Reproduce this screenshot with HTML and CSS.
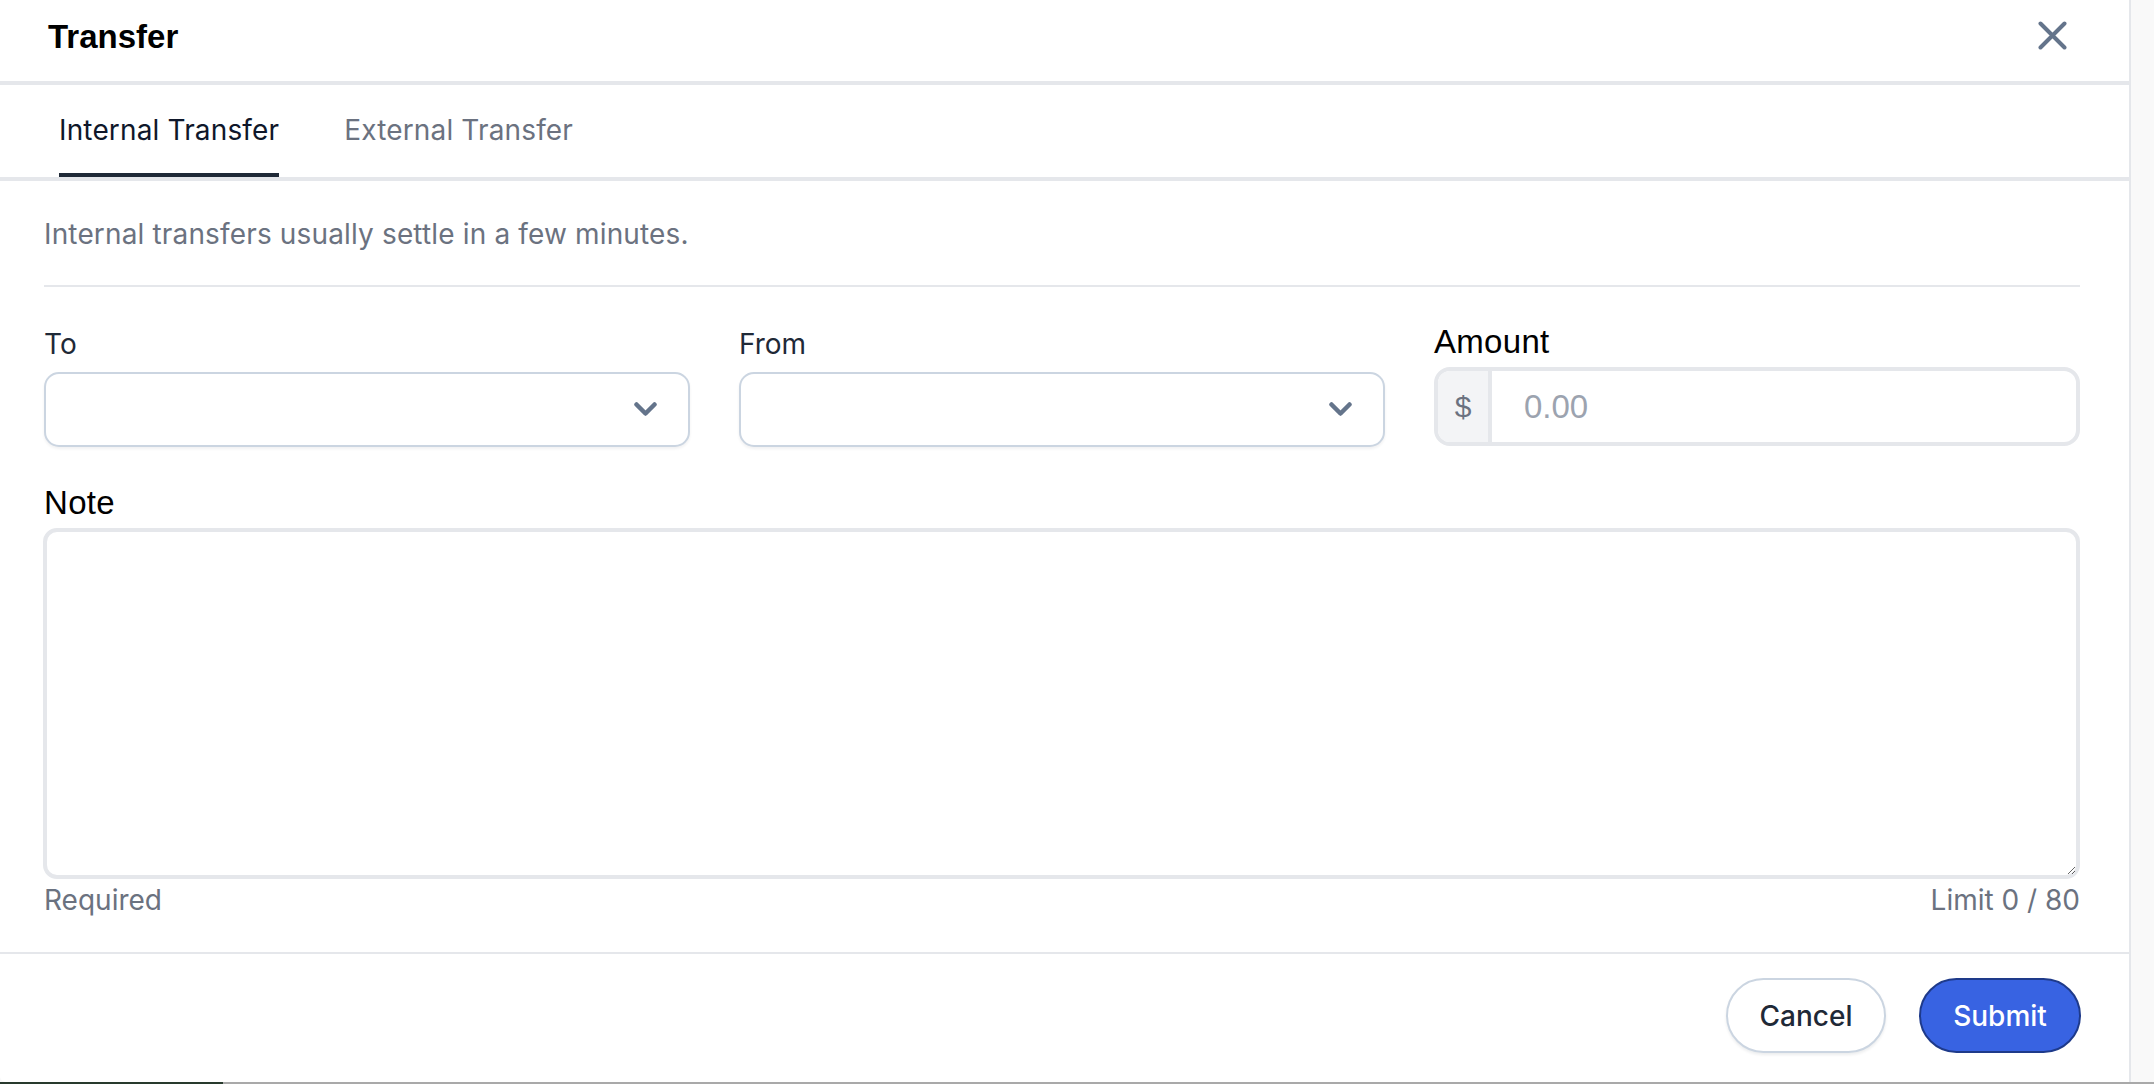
FILE: index.html
```html
<!DOCTYPE html>
<html lang="en">
<head>
<meta charset="utf-8">
<title>Transfer</title>
<link rel="stylesheet" href="styles.css">
</head>
<body>
<div class="screen">
  <div class="window">
    <div class="modal">
      <div class="modal-header">
        <h1 class="modal-title">Transfer</h1>
        <button class="close-btn" aria-label="Close">
          <svg width="29" height="29" viewBox="0 0 29 29" fill="none"><path d="M2.5 2.5 L26.5 26.5 M26.5 2.5 L2.5 26.5" stroke="#64748b" stroke-width="4" stroke-linecap="round"/></svg>
        </button>
      </div>
      <div class="tabs">
        <div class="tab tab-active">Internal Transfer</div>
        <div class="tab">External Transfer</div>
      </div>
      <div class="modal-body">
        <p class="description">Internal transfers usually settle in a few minutes.</p>
        <div class="divider"></div>
        <div class="fields">
          <div class="field">
            <label class="field-label">To</label>
            <div class="select">
              <svg class="chevron" width="23" height="14" viewBox="0 0 23 14" fill="none"><polyline points="2.5,2.5 11.5,11.5 20.5,2.5" stroke="#64748b" stroke-width="4.5" stroke-linecap="round" stroke-linejoin="round"/></svg>
            </div>
          </div>
          <div class="field">
            <label class="field-label">From</label>
            <div class="select">
              <svg class="chevron" width="23" height="14" viewBox="0 0 23 14" fill="none"><polyline points="2.5,2.5 11.5,11.5 20.5,2.5" stroke="#64748b" stroke-width="4.5" stroke-linecap="round" stroke-linejoin="round"/></svg>
            </div>
          </div>
          <div class="field">
            <label class="field-label-alt">Amount</label>
            <div class="amount-group">
              <span class="amount-prefix">$</span>
              <input class="amount-input" type="text" placeholder="0.00">
            </div>
          </div>
        </div>
        <label class="field-label-alt note-label">Note</label>
        <textarea class="note"></textarea>
        <div class="helper-row">
          <span>Required</span>
          <span>Limit 0 / 80</span>
        </div>
      </div>
      <div class="modal-footer">
        <button class="btn btn-secondary">Cancel</button>
        <button class="btn btn-primary">Submit</button>
      </div>
    </div>
    <div class="track"></div>
  </div>
  <div class="taskbar">
    <div class="taskbar-dark"></div>
    <div class="taskbar-gray"></div>
  </div>
</div>
</body>
</html>
```

FILE: styles.css
```css
* { box-sizing: border-box; }

html, body {
  margin: 0;
  padding: 0;
  background: #f9f9f9;
  font-family: "Inter", "Noto Sans", sans-serif;
}

.screen {
  width: 2154px;
  height: 1084px;
  display: flex;
  flex-direction: column;
  overflow: hidden;
}

.window {
  display: flex;
  height: 1082px;
}

.modal {
  width: 2131px;
  height: 1082px;
  background: #ffffff;
  border-right: 2px solid #e5e7eb;
  border-bottom-left-radius: 6px;
  display: flex;
  flex-direction: column;
}

.track {
  flex: 1;
  background: #f9f9f9;
}

.taskbar {
  display: flex;
  height: 2px;
}
.taskbar-dark { width: 223px; background: #283a2d; }
.taskbar-gray { flex: 1; background: #a9a9a9; }

/* Header */
.modal-header {
  height: 85px;
  border-bottom: 4px solid #e5e7eb;
  display: flex;
  justify-content: space-between;
  align-items: flex-start;
  padding: 17px 62px 0 48px;
}

.modal-title {
  margin: 0;
  font-family: "Liberation Sans", Arial, sans-serif;
  font-weight: 700;
  font-size: 33px;
  line-height: 40px;
  color: #000000;
}

.close-btn {
  margin-top: 4px;
  padding: 0;
  border: 0;
  background: none;
  width: 29px;
  height: 29px;
  display: block;
}
.close-btn svg { display: block; }

/* Tabs */
.tabs {
  display: flex;
  gap: 65px;
  padding-left: 59px;
  border-bottom: 4px solid #e5e7eb;
}

.tab {
  font-size: 28px;
  line-height: 36px;
  letter-spacing: 0.15px;
  padding: 27px 0 25px;
  color: #6b7280;
  border-bottom: 4px solid transparent;
}

.tab-active {
  color: #0f172a;
  border-bottom-color: #1f2937;
}

/* Body */
.modal-body {
  flex: 1;
  padding: 35px 49px 0 44px;
}

.description {
  margin: 0;
  font-size: 28px;
  line-height: 36px;
  letter-spacing: 0.15px;
  color: #6b7280;
}

.divider {
  height: 2px;
  background: #e5e7eb;
  margin-top: 33px;
}

.fields {
  display: grid;
  grid-template-columns: repeat(3, 1fr);
  column-gap: 49px;
  margin-top: 36px;
}

.field {
  display: flex;
  flex-direction: column;
}

.field-label {
  font-size: 28px;
  line-height: 36px;
  margin-top: 3px;
  margin-bottom: 10px;
  color: #1f2937;
}

.field-label-alt {
  font-family: "Liberation Sans", Arial, sans-serif;
  font-size: 33px;
  line-height: 38px;
  letter-spacing: 0.3px;
  margin-bottom: 6px;
  color: #000000;
}

.select {
  height: 75px;
  border: 2px solid #cbd5e1;
  border-radius: 15px;
  background: #ffffff;
  box-shadow: 0 2px 3px rgba(15, 23, 42, 0.06);
  display: flex;
  align-items: center;
  justify-content: flex-end;
  padding-right: 31px;
}
.chevron { display: block; margin-top: -1px; }

.amount-group {
  height: 79px;
  border: 4px solid #e5e7eb;
  border-radius: 16px;
  display: flex;
  overflow: hidden;
  background: #ffffff;
}

.amount-prefix {
  width: 54px;
  background: #f3f4f6;
  border-right: 4px solid #e5e7eb;
  display: flex;
  align-items: center;
  justify-content: center;
  font-family: "Liberation Sans", Arial, sans-serif;
  font-size: 30px;
  color: #6b7280;
}

.amount-input {
  flex: 1;
  border: 0;
  outline: none;
  padding: 0 0 0 32px;
  font-family: "Liberation Sans", Arial, sans-serif;
  font-size: 33px;
  color: #111827;
  background: transparent;
}
.amount-input::placeholder { color: #9ca3af; }

.note-label {
  display: block;
  margin-top: 37px;
}

.note {
  display: block;
  width: 2037px;
  height: 351px;
  margin-left: -1px;
  border: 4px solid #e5e7eb;
  border-radius: 14px;
  font-family: "Inter", sans-serif;
  font-size: 27px;
  padding: 12px 16px;
  outline: none;
}

.helper-row {
  display: flex;
  justify-content: space-between;
  margin-top: 3px;
  font-size: 28px;
  line-height: 36px;
  color: #6b7280;
}

/* Footer */
.modal-footer {
  border-top: 2px solid #e5e7eb;
  padding: 24px 48px 29px 0;
  display: flex;
  justify-content: flex-end;
  gap: 33px;
}

.btn {
  height: 75px;
  border-radius: 38px;
  font-family: "Inter", sans-serif;
  font-size: 28px;
  font-weight: 500;
  display: inline-flex;
  align-items: center;
  justify-content: center;
}

.btn-secondary {
  width: 160px;
  background: #ffffff;
  color: #1f2937;
  border: 2px solid #cbd5e1;
  box-shadow: 0 2px 3px rgba(15, 23, 42, 0.08);
}

.btn-primary {
  width: 162px;
  background: #3863e2;
  color: #ffffff;
  border: 2px solid #1e3a8a;
}
```
